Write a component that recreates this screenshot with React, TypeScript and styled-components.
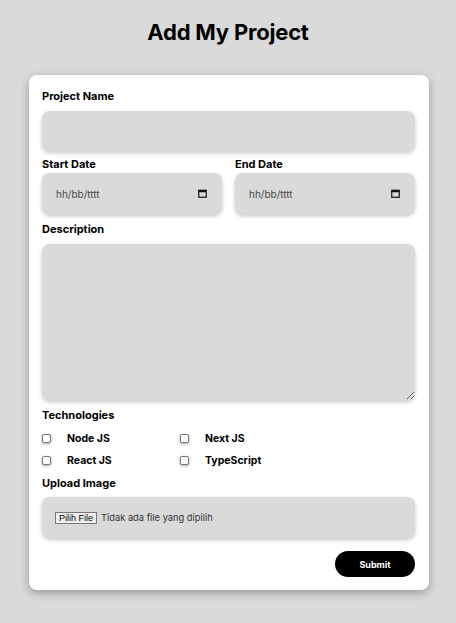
import React from "react";
import styled, { createGlobalStyle } from "styled-components";

const Global = createGlobalStyle`
  html, body { margin: 0; padding: 0; background: #dadada; }
  body { font-family: "Inter", "Noto Sans", sans-serif; color: #000; }
  * { box-sizing: border-box; }
`;

const Page = styled.div`
  display: flex;
  flex-direction: column;
  align-items: center;
  padding-top: 18px;
  min-height: 623px;
`;

const Title = styled.h1`
  margin: 0 0 29px;
  font-size: 22px;
  line-height: 28px;
  font-weight: 700;
  letter-spacing: -0.2px;
`;

const Card = styled.form`
  width: 400px;
  margin-left: 2px;
  background: #fff;
  border-radius: 8px;
  padding: 13px 14px 13px 13px;
  box-shadow: 0 3px 10px rgba(0, 0, 0, 0.3);
  display: flex;
  flex-direction: column;
`;

const Label = styled.label<{ $mt?: number }>`
  display: block;
  font-size: 11px;
  line-height: 16px;
  font-weight: 700;
  margin-top: ${(p) => p.$mt ?? 0}px;
`;

const fieldBase = `
  display: block;
  width: 100%;
  border: none;
  outline: none;
  background: #dadada;
  border-radius: 8px;
  box-shadow: 0 2px 4px rgba(0, 0, 0, 0.22);
  font-family: inherit;
`;

const TextInput = styled.input<{ $mt?: number; $h?: number }>`
  ${fieldBase}
  height: ${(p) => p.$h ?? 40}px;
  margin-top: ${(p) => p.$mt ?? 0}px;
  padding: 0 14px;
  font-size: 10px;
`;

const DateRow = styled.div`
  display: grid;
  grid-template-columns: 1fr 1fr;
  column-gap: 13px;
  margin-top: 5px;
`;

const DateCol = styled.div`
  display: flex;
  flex-direction: column;
`;

const DateBox = styled.div`
  ${fieldBase}
  margin-top: 1px;
  height: 41px;
  display: flex;
  align-items: center;
  justify-content: space-between;
  padding: 0 15px 0 14px;
`;

const DateText = styled.input`
  border: none;
  outline: none;
  background: transparent;
  font-family: inherit;
  font-size: 10px;
  width: 100px;
  padding: 0;
  color: #3a3a3a;
  &::placeholder { color: #4a4a4a; }
`;

const TextArea = styled.textarea`
  ${fieldBase}
  margin-top: 7px;
  height: 156px;
  padding: 10px 14px;
  font-size: 10px;
  resize: vertical;
`;

const CheckGrid = styled.div`
  display: grid;
  grid-template-columns: 138px 138px;
  row-gap: 6px;
  margin-top: 7px;
`;

const CheckItem = styled.label`
  display: flex;
  align-items: center;
  height: 16px;
  font-size: 10.5px;
  font-weight: 700;
`;

const Check = styled.input`
  appearance: none;
  width: 9px;
  height: 9px;
  margin: 0 16px 0 0;
  border: 1px solid #767676;
  border-radius: 2px;
  background: #fff;
  box-shadow: 0 1px 3px rgba(0, 0, 0, 0.35);
  &:checked { background: #0075ff; border-color: #0075ff; }
`;

const FileBox = styled.label`
  ${fieldBase}
  margin-top: 6px;
  height: 41px;
  display: flex;
  align-items: center;
  padding: 0 13px;
  cursor: pointer;
`;

const HiddenFile = styled.input`
  display: none;
`;

const FileButton = styled.span`
  font-family: "Liberation Sans", Arial, sans-serif;
  font-size: 9px;
  line-height: 10px;
  padding: 0 3px;
  border: 1px solid #767676;
  background: #efefef;
  color: #000;
  margin-right: 4px;
`;

const FileText = styled.span`
  font-size: 9.3px;
  color: #333;
`;

const Actions = styled.div`
  display: flex;
  justify-content: flex-end;
  margin-top: 13px;
`;

const Submit = styled.button`
  width: 80px;
  height: 26px;
  border: none;
  border-radius: 13px;
  background: #000;
  color: #fff;
  font-family: inherit;
  font-size: 9px;
  font-weight: 700;
  cursor: pointer;
`;

const CalendarIcon = () => (
  <svg width="9" height="9" viewBox="0 0 9 9" aria-hidden="true">
    <rect x="0.75" y="1.25" width="7.5" height="7" fill="none" stroke="#111" strokeWidth="1.2" />
    <rect x="0.75" y="1.25" width="7.5" height="2" fill="#111" />
  </svg>
);

const techs = ["Node JS", "Next JS", "React JS", "TypeScript"];

export default function App() {
  return (
    <>
      <Global />
      <Page>
        <Title>Add My Project</Title>
        <Card onSubmit={(e) => e.preventDefault()}>
          <Label htmlFor="name">Project Name</Label>
          <TextInput id="name" type="text" $mt={7} />
          <DateRow>
            <DateCol>
              <Label>Start Date</Label>
              <DateBox>
                <DateText placeholder="hh/bb/tttt" />
                <CalendarIcon />
              </DateBox>
            </DateCol>
            <DateCol>
              <Label>End Date</Label>
              <DateBox>
                <DateText placeholder="hh/bb/tttt" />
                <CalendarIcon />
              </DateBox>
            </DateCol>
          </DateRow>
          <Label $mt={7} htmlFor="desc">Description</Label>
          <TextArea id="desc" />
          <Label $mt={7}>Technologies</Label>
          <CheckGrid>
            {techs.map((t) => (
              <CheckItem key={t}>
                <Check type="checkbox" />
                {t}
              </CheckItem>
            ))}
          </CheckGrid>
          <Label $mt={7}>Upload Image</Label>
          <FileBox>
            <HiddenFile type="file" />
            <FileButton>Pilih File</FileButton>
            <FileText>Tidak ada file yang dipilih</FileText>
          </FileBox>
          <Actions>
            <Submit type="submit">Submit</Submit>
          </Actions>
        </Card>
      </Page>
    </>
  );
}
